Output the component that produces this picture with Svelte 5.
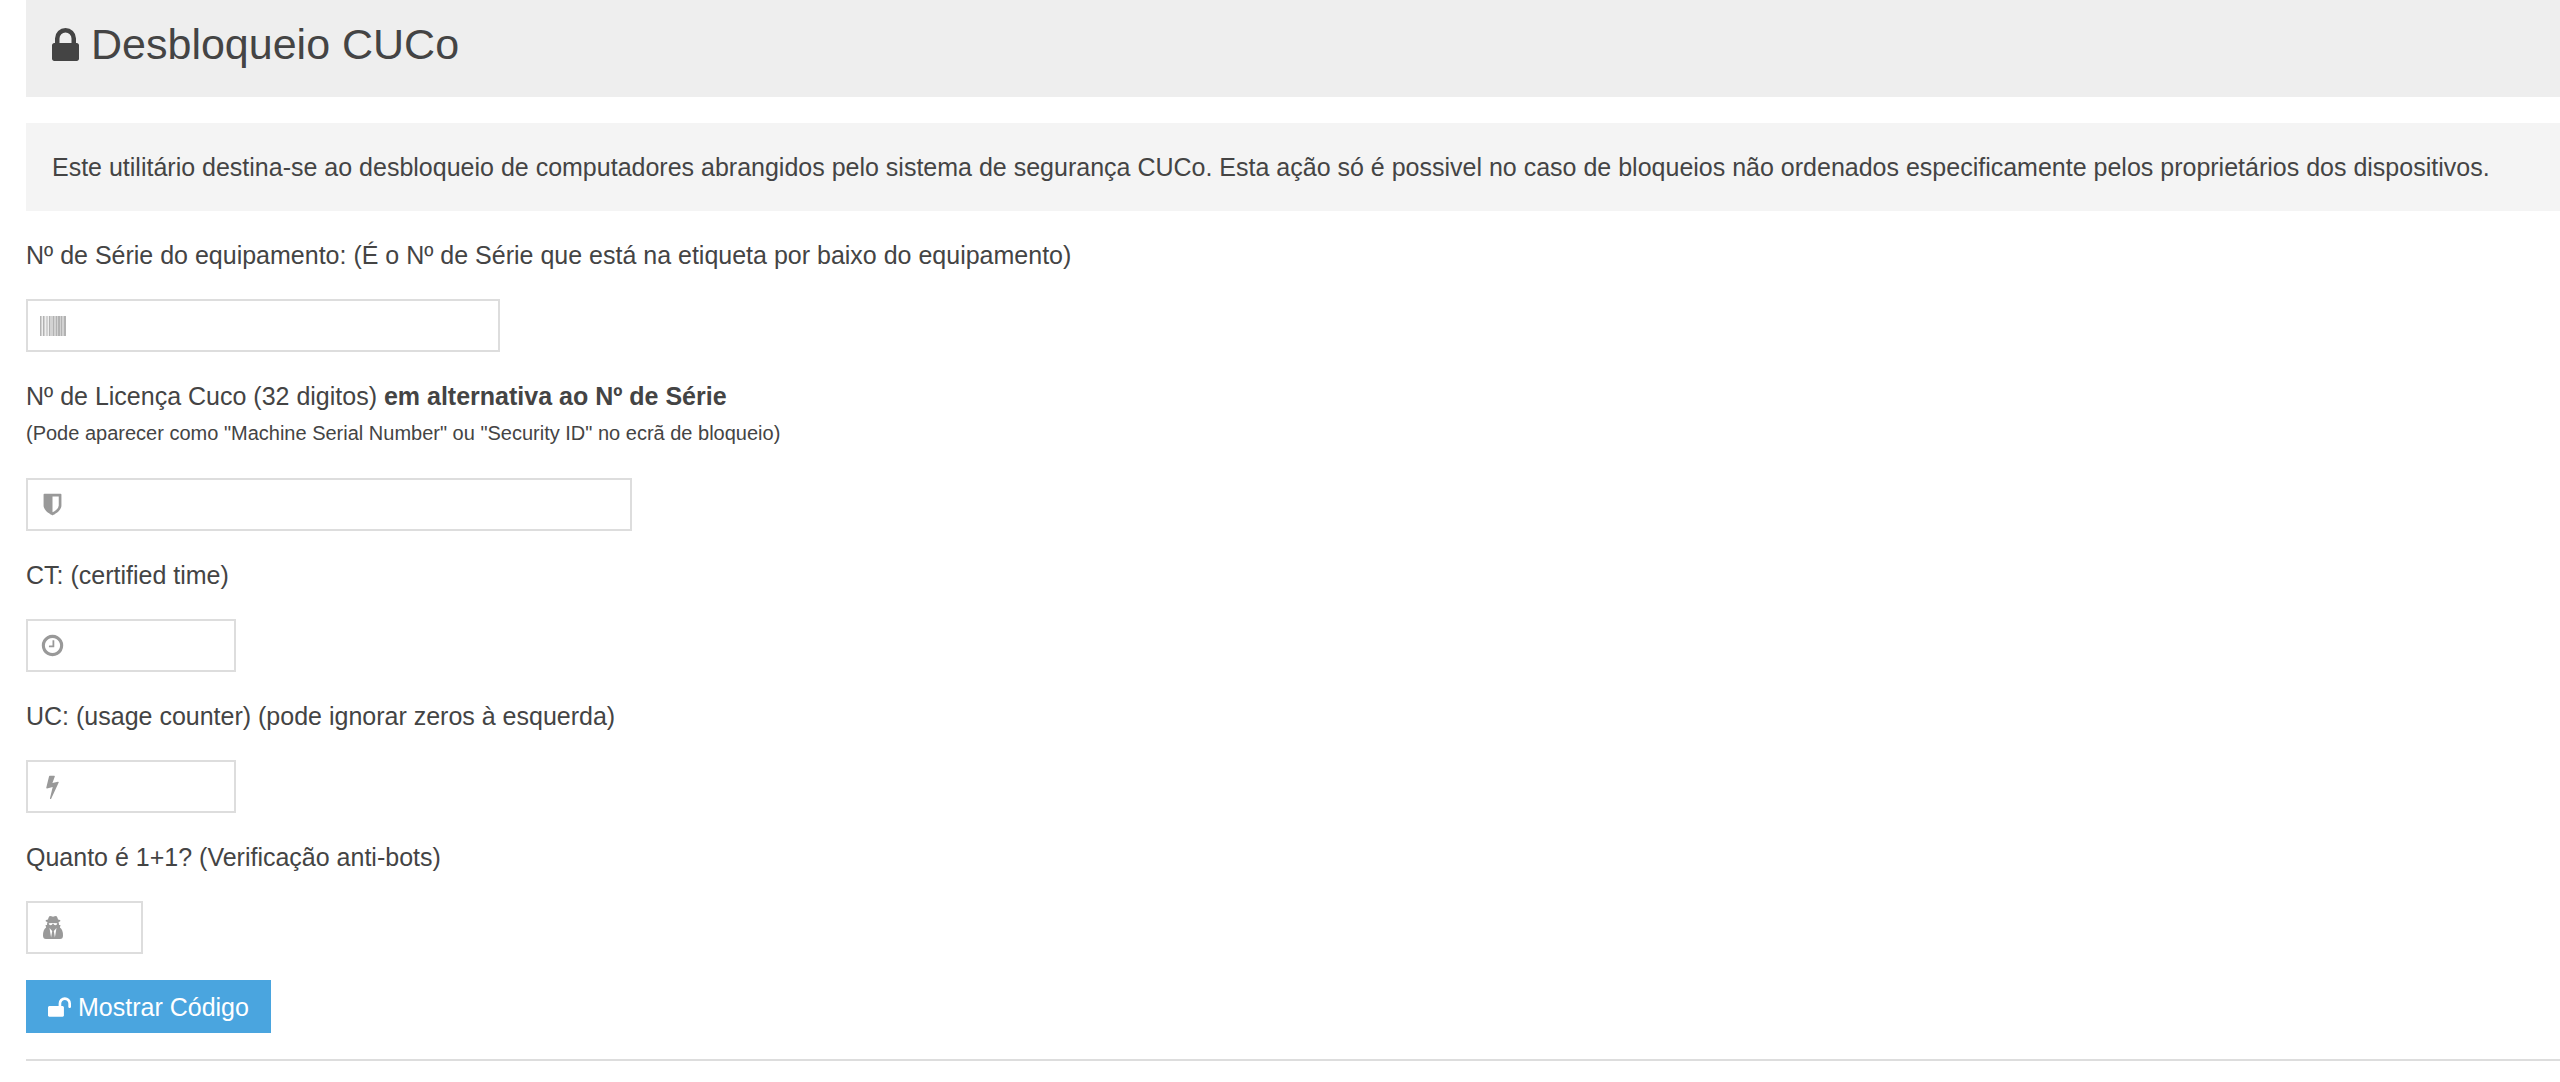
<script>
  let values = $state({ serial: '', license: '', ct: '', uc: '', check: '' });
</script>

{#snippet field(id, size)}
  <div class="field {size}">
    <span class="icon" aria-hidden="true">
      {#if id === 'serial'}
        <svg width="26" height="20" viewBox="0 0 26 20">
          <path fill="#d2d2d2" d="M0 0h26v20H0z" />
          <path fill="#b2b2b2" d="M0 0h1v20H0zM3 0h1v20H3zM9 0h1v20H9zM13 0h1v20h-1zM16 0h1v20h-1zM18 0h2v20h-2zM21 0h1v20h-1zM24 0h2v20h-2z" />
          <path fill="#efefef" d="M2 0h1v20H2zM5 0h1v20H5zM8 0h1v20H8z" />
        </svg>
      {:else if id === 'license'}
        <svg width="25" height="25" viewBox="0 0 1792 1792">
          <path d="M1344 960v-640h-448v1137q119-63 213-137 235-184 235-360zm192-768v768q0 86-33.5 170.5t-83 150-118 127.5-126.5 103-121 77.5-89.5 49.5-42.5 20q-12 6-26 6t-26-6q-16-7-42.5-20t-89.5-49.5-121-77.5-126.5-103-118-127.5-83-150-33.5-170.5v-768q0-26 19-45t45-19h1152q26 0 45 19t19 45z" />
        </svg>
      {:else if id === 'ct'}
        <svg width="25" height="25" viewBox="0 0 1792 1792">
          <path d="M1024 544v448q0 14-9 23t-23 9h-320q-14 0-23-9t-9-23v-64q0-14 9-23t23-9h224v-352q0-14 9-23t23-9h64q14 0 23 9t9 23zm416 352q0-148-73-273t-198-198-273-73-273 73-198 198-73 273 73 273 198 198 273 73 273-73 198-198 73-273zm224 0q0 209-103 385.5t-279.5 279.5-385.5 103-385.5-103-279.5-279.5-103-385.5 103-385.5 279.5-279.5 385.5-103 385.5 103 279.5 279.5 103 385.5z" />
        </svg>
      {:else if id === 'uc'}
        <svg width="25" height="25" viewBox="0 0 1792 1792">
          <path d="M1333 566q18 20 7 44l-540 1157q-13 25-42 25-4 0-14-2-17-5-25.5-19t-4.5-30l197-808-406 101q-4 1-12 1-18 0-31-11-18-15-13-39l201-825q4-14 16-23t28-9h328q19 0 32 12.5t13 29.5q0 8-5 18l-171 463 396-98q8-2 12-2 19 0 34 15z" />
        </svg>
      {:else}
        <svg width="20" height="23" viewBox="0 0 20 23">
          <path fill-rule="evenodd" d="M7 0q1.500 0 3 .7Q11.500 0 13 0q1.200 0 2 3.600 2.500.6 2.500 1.200 0 .7-2 1.200.6 1.500.5 3h1.500l-.6 2.500Q20 13.500 20 19.500 20 23 17 23H3Q0 23 0 19.500 0 13.500 3.100 11.500L2.500 9H4Q3.900 7.500 4.500 6q-2-.5-2-1.200 0-.6 2.500-1.200Q5.800 0 7 0zM5.700 7.200q.2 2 2 2 1.500 0 2-1.600h.6q.5 1.600 2 1.600 1.800 0 2-2l-4.300-.3zM6.500 12l1.600 9.500L9.200 15zM13.500 12l-1.600 9.500L10.800 15z" />
        </svg>
      {/if}
    </span>
    <input {id} name={id} type="text" autocomplete="off" bind:value={values[id]} />
  </div>
{/snippet}

<main>
  <header>
    <h1>
      <svg width="27" height="33" viewBox="320 128 1152 1408" aria-hidden="true">
        <path d="M640 768h512v-192q0-106-75-181t-181-75-181 75-75 181v192zm832 96v576q0 40-28 68t-68 28h-960q-40 0-68-28t-28-68v-576q0-40 28-68t68-28h32v-192q0-184 132-316t316-132 316 132 132 316v192h32q40 0 68 28t28 68z" />
      </svg>
      Desbloqueio CUCo
    </h1>
  </header>

  <p class="notice">Este utilitário destina-se ao desbloqueio de computadores abrangidos pelo sistema de segurança CUCo. Esta ação só é possivel no caso de bloqueios não ordenados especificamente pelos proprietários dos dispositivos.</p>

  <form onsubmit={(e) => e.preventDefault()}>
    <label for="serial">Nº de Série do equipamento: (É o Nº de Série que está na etiqueta por baixo do equipamento)</label>
    {@render field('serial', 'medium')}

    <label for="license">
      Nº de Licença Cuco (32 digitos) <strong>em alternativa ao Nº de Série</strong>
      <small>(Pode aparecer como "Machine Serial Number" ou "Security ID" no ecrã de bloqueio)</small>
    </label>
    {@render field('license', 'large')}

    <label for="ct">CT: (certified time)</label>
    {@render field('ct', 'small')}

    <label for="uc">UC: (usage counter) (pode ignorar zeros à esquerda)</label>
    {@render field('uc', 'small')}

    <label for="check">Quanto é 1+1? (Verificação anti-bots)</label>
    {@render field('check', 'mini')}

    <button type="submit">
      <svg width="23" height="20" viewBox="64 128 1664 1408" aria-hidden="true">
        <path d="M1728 576v256q0 26-19 45t-45 19h-64q-26 0-45-19t-19-45v-256q0-106-75-181t-181-75-181 75-75 181v192h96q40 0 68 28t28 68v576q0 40-28 68t-68 28h-960q-40 0-68-28t-28-68v-576q0-40 28-68t68-28h672v-192q0-185 131.500-316.500t316.500-131.500 316.500 131.500 131.500 316.500z" />
      </svg>
      Mostrar Código
    </button>
  </form>

  <hr />
</main>

<style>
  :global(body) {
    margin: 0;
    background: #fff;
  }

  main {
    display: flex;
    flex-direction: column;
    gap: 26px;
    padding: 0 0 22px 26px;
    color: #444;
    font: 25px/36px "Liberation Sans", Arial, sans-serif;
  }

  header {
    padding: 18px 26px 26px;
    background: #eee;
  }

  h1 {
    display: flex;
    align-items: center;
    gap: 12px;
    margin: 0;
    font-size: 43px;
    font-weight: 400;
    line-height: 53px;
  }

  svg {
    display: block;
    fill: currentColor;
  }

  .notice {
    margin: 0;
    padding: 26px;
    background: #f4f4f4;
  }

  form {
    display: flex;
    flex-direction: column;
    align-items: flex-start;
    gap: 26px;
  }

  small {
    display: block;
    font-size: 20px;
    line-height: 38px;
  }

  .field {
    position: relative;
    max-width: 100%;
  }

  .medium { width: 474px; }
  .large { width: 606px; }
  .small { width: 210px; }
  .mini { width: 117px; }

  .icon {
    position: absolute;
    inset: 0 auto 0 0;
    display: flex;
    align-items: center;
    justify-content: center;
    width: 53px;
    color: #999;
    pointer-events: none;
  }

  input {
    display: block;
    box-sizing: border-box;
    width: 100%;
    height: 53px;
    padding: 0 9px 0 53px;
    border: 2px solid #ddd;
    border-radius: 0;
    background: #fff;
    color: inherit;
    font: inherit;
  }

  button {
    display: flex;
    align-items: center;
    gap: 7px;
    height: 53px;
    padding: 0 22px;
    border: 0;
    background: #4aa5df;
    color: #fff;
    font: inherit;
    cursor: pointer;
  }

  hr {
    width: 100%;
    margin: 0;
    border: 0;
    border-top: 2px solid #ddd;
  }
</style>
